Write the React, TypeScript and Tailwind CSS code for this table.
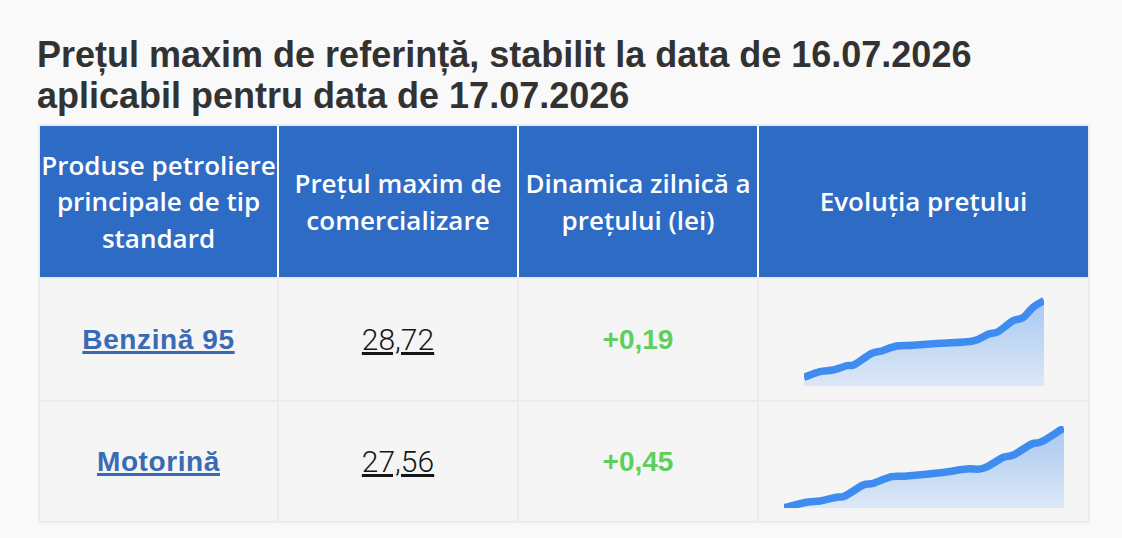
import React from "react";

type Pt = [number, number];

const cols = "grid grid-cols-[237px_238px_238px_329px] gap-x-[2px]";

const fuels = [
  {
    name: "Benzină 95",
    price: "28,72",
    change: "+0,19",
    rowH: "h-[121px]",
    chart: {
      w: 240,
      h: 89,
      pad: "pb-[14px]",
      pts: [
        [0, 80.3], [16, 74.7], [29, 73], [43, 68.7], [51, 67.3], [67.7, 56.3],
        [77.7, 54], [92.7, 49], [109, 48.3], [136, 46.3], [169, 44], [184, 37.3],
        [194, 34.7], [209, 23.7], [219, 20.7], [229, 10.3], [240, 3.5],
      ] as Pt[],
    },
  },
  {
    name: "Motorină",
    price: "27,56",
    change: "+0,45",
    rowH: "h-[119px]",
    chart: {
      w: 280,
      h: 82,
      pad: "pb-[13px]",
      pts: [
        [0, 81.7], [22.7, 76.3], [36, 75], [52.7, 71.3], [61, 70], [79.3, 59],
        [89.3, 57.3], [107.7, 50.7], [122.7, 50], [156, 46.7], [182.7, 43],
        [199.3, 42.3], [219.3, 31.3], [229.3, 29], [247.7, 18], [257.7, 15.7],
        [277.7, 3.3], [280, 2.5],
      ] as Pt[],
    },
  },
];

// catmull-rom -> bezier
function smooth(pts: Pt[]) {
  let d = `M${pts[0][0]},${pts[0][1]}`;
  for (let i = 0; i < pts.length - 1; i++) {
    const p0 = pts[i - 1] ?? pts[i];
    const p1 = pts[i];
    const p2 = pts[i + 1];
    const p3 = pts[i + 2] ?? p2;
    const t = 1 / 6;
    const c1x = p1[0] + (p2[0] - p0[0]) * t;
    const c1y = p1[1] + (p2[1] - p0[1]) * t;
    const c2x = p2[0] - (p3[0] - p1[0]) * t;
    const c2y = p2[1] - (p3[1] - p1[1]) * t;
    d += ` C${c1x},${c1y} ${c2x},${c2y} ${p2[0]},${p2[1]}`;
  }
  return d;
}

const Sparkline: React.FC<{ id: string; w: number; h: number; pts: Pt[] }> = ({ id, w, h, pts }) => {
  const line = smooth(pts);
  const last = pts[pts.length - 1];
  const area = `${line} L${last[0]},${h} L${pts[0][0]},${h} Z`;
  return (
    <svg width={w} height={h} viewBox={`0 0 ${w} ${h}`} className="block">
      <defs>
        <linearGradient id={id} x1="0" y1="0" x2="0" y2="1">
          <stop offset="0%" stopColor="#a9c8f2" />
          <stop offset="100%" stopColor="#dce8f6" />
        </linearGradient>
      </defs>
      <path d={area} fill={`url(#${id})`} />
      <path d={line} fill="none" stroke="#3f8cf0" strokeWidth={7.5} strokeLinejoin="round" />
    </svg>
  );
};

const headCell =
  "flex items-center justify-center bg-[#2e6bc4] text-center text-[26px] leading-[36.5px] font-semibold text-white font-['Open_Sans',sans-serif]";

export default function App() {
  return (
    <div className="min-h-screen bg-[#f9f9f9] pl-[37px] pt-[34px]">
      <h1 className="font-['Liberation_Sans',Arial,sans-serif] text-[36px] leading-[41px] font-bold text-[#323232]">
        Prețul maxim de referință, stabilit la data de 16.07.2026
        <br />
        aplicabil pentru data de 17.07.2026
      </h1>

      <div className="mt-[8px] ml-px flex w-[1052px] flex-col gap-y-[2px] bg-[#ebebef] p-[2px]">
        <div className={`${cols} h-[151px] bg-white`}>
          <div className={headCell}>
            Produse petroliere
            <br />
            principale de tip
            <br />
            standard
          </div>
          <div className={headCell}>
            Prețul maxim de
            <br />
            comercializare
          </div>
          <div className={headCell}>
            Dinamica zilnică a
            <br />
            prețului (lei)
          </div>
          <div className={headCell}>Evoluția prețului</div>
        </div>

        {fuels.map((f, i) => (
          <div key={f.name} className={`${cols} ${f.rowH}`}>
            <div className="flex items-center justify-center bg-[#f5f5f5]">
              <a
                href="#"
                className="font-['Liberation_Sans',Arial,sans-serif] text-[28px] font-bold tracking-[0.6px] text-[#3a6ab3] underline decoration-[3px] underline-offset-[2px]"
              >
                {f.name}
              </a>
            </div>
            <div className="flex items-center justify-center bg-[#f5f5f5]">
              <a
                href="#"
                className="font-['Roboto',sans-serif] text-[30px] font-light text-[#161616] underline decoration-[3px] underline-offset-[2px]"
              >
                {f.price}
              </a>
            </div>
            <div className="flex items-center justify-center bg-[#f5f5f5]">
              <span className="font-['Liberation_Sans',Arial,sans-serif] text-[28px] font-bold text-[#5dcf5d]">
                {f.change}
              </span>
            </div>
            <div className={`flex items-end justify-center bg-[#f5f5f5] ${f.chart.pad}`}>
              <Sparkline id={`spark-${i}`} w={f.chart.w} h={f.chart.h} pts={f.chart.pts} />
            </div>
          </div>
        ))}
      </div>
    </div>
  );
}
